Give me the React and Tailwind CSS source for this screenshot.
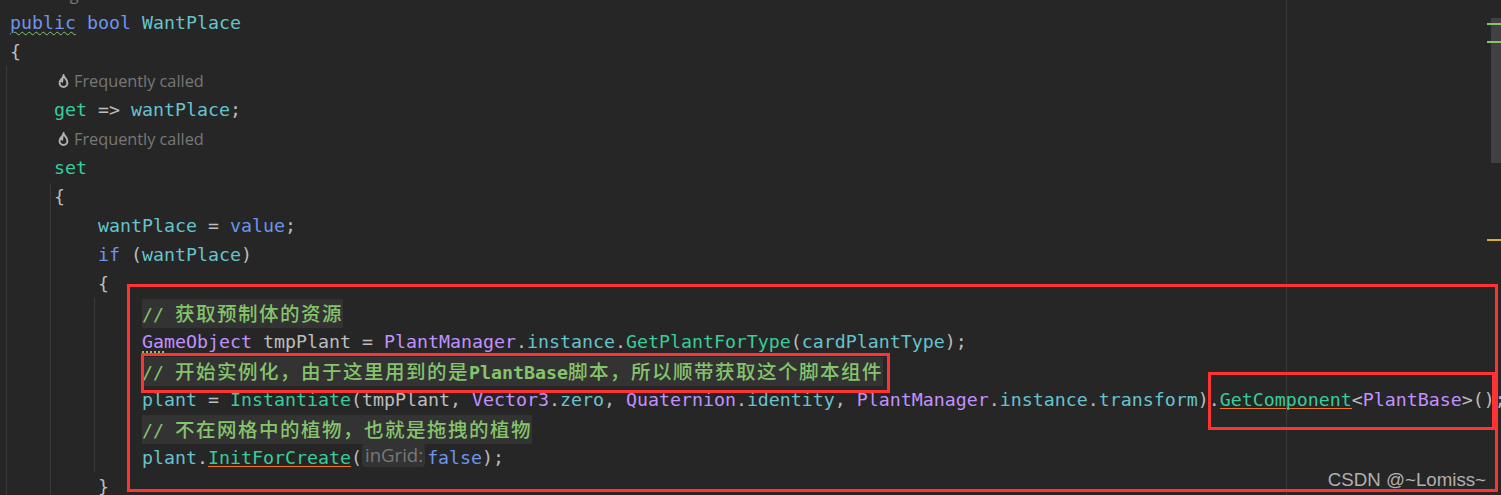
const KW = 'text-[#6C95EB]';
const FIELD = 'text-[#66C3CC]';
const METHOD = 'text-[#39CC9B]';
const CLS = 'text-[#C191FF]';
const CJK = 'text-[19.5px] font-medium tracking-[1.5px] font-["Noto_Sans_CJK_SC",sans-serif]';
const WARN = 'inline-block h-[23px] border-b border-[#F0751A] align-top';

const Line = ({ indent = 0, children }) => {
  const pads = ['pl-[10px]', 'pl-[54px]', 'pl-[98px]', 'pl-[142px]'];
  return <div className={`h-[29px] whitespace-pre leading-[27px] ${pads[indent]}`}>{children}</div>;
};

const Comment = ({ children }) => (
  <span className="inline-block h-[29px] bg-[#333333] align-top leading-[27px] text-[#85C46C]">{children}</span>
);

const Flame = () => (
  <svg width="11" height="15" viewBox="0 0 11 15" fill="none" stroke="#b0b0b0" strokeWidth="2" className="mr-[5px]">
    <path d="M5.5 1.5c.4 2.2 3.9 3.6 3.9 7.6a3.9 3.9 0 0 1-7.8 0c0-1.6.6-2.7 1.3-3.5.2 1 .6 1.5 1.2 1.8.1-2 .3-4 1.4-5.9z" />
  </svg>
);

const Hint = () => (
  <div className='flex h-[29px] items-center pl-[58px] font-["Open_Sans",sans-serif] text-[16.3px] text-[#787878]'>
    <Flame />
    Frequently called
  </div>
);

const Box = ({ className }) => <div className={`absolute border-[3px] border-[#FF3333] ${className}`} />;

export default function App() {
  return (
    <div className='relative h-[495px] w-[1501px] overflow-hidden bg-[#262626] font-["DejaVu_Sans_Mono",monospace] text-[18.27px] text-[#BDBDBD]'>
      <div className="pt-[9px]">
        <div className='-mt-[29px] flex h-[29px] items-center pl-[12px] font-["Open_Sans",sans-serif] text-[16.3px] text-[#787878]'>
          <span className="mr-[8px]">≡</span>1 usage
        </div>
        <Line>
          <span className={`${KW} underline decoration-[#85C46C] decoration-wavy decoration-1 underline-offset-2`}>public</span>
          <span> </span>
          <span className={KW}>bool</span>
          <span> </span>
          <span className={FIELD}>WantPlace</span>
        </Line>
        <Line>{'{'}</Line>
        <Hint />
        <Line indent={1}>
          <span className={METHOD}>get</span> =&gt; <span className={FIELD}>wantPlace</span>;
        </Line>
        <Hint />
        <Line indent={1}>
          <span className={METHOD}>set</span>
        </Line>
        <Line indent={1}>{'{'}</Line>
        <Line indent={2}>
          <span className={FIELD}>wantPlace</span> = <span className={KW}>value</span>;
        </Line>
        <Line indent={2}>
          <span className={KW}>if</span> (<span className={FIELD}>wantPlace</span>)
        </Line>
        <Line indent={2}>{'{'}</Line>
        <Line indent={3}>
          <Comment>
            {'// '}
            <span className={CJK}>获取预制体的资源</span>
          </Comment>
        </Line>
        <Line indent={3}>
          <span className={CLS}>
            <span className="underline decoration-[#85C46C] decoration-dotted decoration-2 underline-offset-3">Ga</span>
            meObject
          </span>{' '}
          tmpPlant = <span className={CLS}>PlantManager</span>.<span className={FIELD}>instance</span>.
          <span className={METHOD}>GetPlantForType</span>(<span className={FIELD}>cardPlantType</span>);
        </Line>
        <Line indent={3}>
          <Comment>
            {'// '}
            <span className={CJK}>开始实例化，由于这里用到的是</span>
            <span className="font-bold">PlantBase</span>
            <span className={CJK}>脚本，所以顺带获取这个脚本组件</span>
          </Comment>
        </Line>
        <Line indent={3}>
          <span className={FIELD}>plant</span> = <span className={METHOD}>Instantiate</span>(tmpPlant,{' '}
          <span className={CLS}>Vector3</span>.<span className={FIELD}>zero</span>,{' '}
          <span className={CLS}>Quaternion</span>.<span className={FIELD}>identity</span>,{' '}
          <span className={CLS}>PlantManager</span>.<span className={FIELD}>instance</span>.
          <span className={FIELD}>transform</span>).
          <span className={`${METHOD} ${WARN}`}>GetComponent</span>
          &lt;<span className={CLS}>PlantBase</span>&gt;();
        </Line>
        <Line indent={3}>
          <Comment>
            {'// '}
            <span className={CJK}>不在网格中的植物，也就是拖拽的植物</span>
          </Comment>
        </Line>
        <Line indent={3}>
          <span className={FIELD}>plant</span>.
          <span className={`${METHOD} ${WARN}`}>InitForCreate</span>(
          <span className='mr-[2px] inline-block h-[23px] rounded-[4px] bg-[#333333] pl-[3px] pr-[2px] align-top font-["Open_Sans",sans-serif] text-[18.6px] leading-[22px] text-[#787878]'>
            inGrid:
          </span>
          <span className={KW}>false</span>);
        </Line>
        <Line indent={2}>{'}'}</Line>
      </div>

      {/* indent guides, margin line, scrollbar */}
      <div className="absolute left-[6px] top-[66px] bottom-0 w-px bg-[#3a3a3a]" />
      <div className="absolute left-[50px] top-[183px] bottom-0 w-px bg-[#3a3a3a]" />
      <div className="absolute left-[94px] top-[298px] h-[174px] w-px bg-[#3a3a3a]" />
      <div className="absolute left-[1286px] top-0 bottom-0 w-px bg-[#3a3a3a]" />
      <div className="absolute right-0 top-[18px] h-[145px] w-[10px] bg-[#414144]" />
      <div className="absolute right-0 top-[23px] h-[2px] w-[14px] bg-[#85C46C]" />
      <div className="absolute right-0 top-[41px] h-[2px] w-[14px] bg-[#85C46C]" />
      <div className="absolute right-0 top-[239px] h-[2px] w-[14px] bg-[#D9B01E]" />

      {/* annotation boxes */}
      <Box className="left-[127px] top-[284px] h-[208px] w-[1371px]" />
      <Box className="left-[141px] top-[353px] h-[40px] w-[749px]" />
      <Box className="left-[1208px] top-[372px] h-[58px] w-[287px]" />

      <div className='absolute right-[15px] top-[466px] font-["Liberation_Sans",sans-serif] text-[18.7px] text-[#B0B0B0]'>
        CSDN @~Lomiss~
      </div>
    </div>
  );
}
